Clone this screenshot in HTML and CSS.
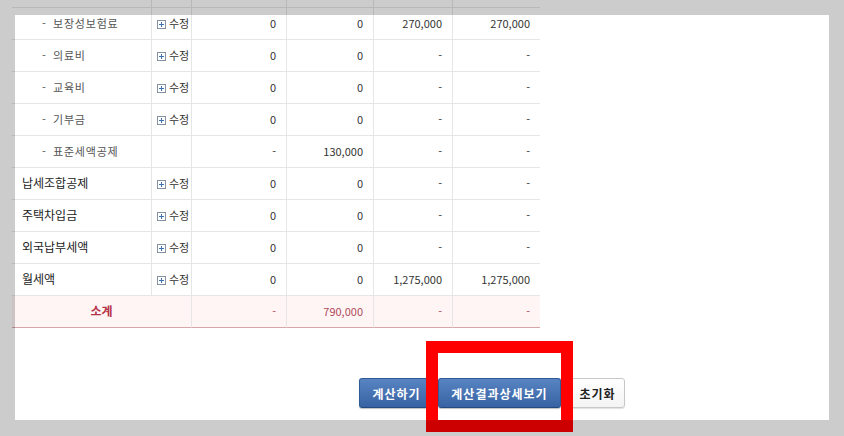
FILE: index.html
```html
<!DOCTYPE html>
<html lang="ko">
<head>
<meta charset="utf-8">
<link rel="stylesheet" href="styles.css">
</head>
<body>
<div class="page">
  <table class="grid">
    <colgroup>
      <col class="c1"><col class="c2"><col class="c3"><col class="c4"><col class="c5"><col class="c6">
    </colgroup>
    <tr class="cut"><td></td><td></td><td></td><td></td><td></td><td></td></tr>
    <tr>
      <td class="name sub"><span class="dash">-</span>보장성보험료</td>
      <td class="edit"><svg class="plus" viewBox="0 0 9 9" width="9" height="9"><rect x="0.5" y="0.5" width="8" height="8" fill="#fff" stroke="#8592a4"/><path d="M4.5 2v5M2 4.5h5" stroke="#3f73b3" stroke-width="1"/></svg>수정</td>
      <td class="num">0</td><td class="num">0</td><td class="num">270,000</td><td class="num">270,000</td>
    </tr>
    <tr>
      <td class="name sub"><span class="dash">-</span>의료비</td>
      <td class="edit"><svg class="plus" viewBox="0 0 9 9" width="9" height="9"><rect x="0.5" y="0.5" width="8" height="8" fill="#fff" stroke="#8592a4"/><path d="M4.5 2v5M2 4.5h5" stroke="#3f73b3" stroke-width="1"/></svg>수정</td>
      <td class="num">0</td><td class="num">0</td><td class="num">-</td><td class="num">-</td>
    </tr>
    <tr>
      <td class="name sub"><span class="dash">-</span>교육비</td>
      <td class="edit"><svg class="plus" viewBox="0 0 9 9" width="9" height="9"><rect x="0.5" y="0.5" width="8" height="8" fill="#fff" stroke="#8592a4"/><path d="M4.5 2v5M2 4.5h5" stroke="#3f73b3" stroke-width="1"/></svg>수정</td>
      <td class="num">0</td><td class="num">0</td><td class="num">-</td><td class="num">-</td>
    </tr>
    <tr>
      <td class="name sub"><span class="dash">-</span>기부금</td>
      <td class="edit"><svg class="plus" viewBox="0 0 9 9" width="9" height="9"><rect x="0.5" y="0.5" width="8" height="8" fill="#fff" stroke="#8592a4"/><path d="M4.5 2v5M2 4.5h5" stroke="#3f73b3" stroke-width="1"/></svg>수정</td>
      <td class="num">0</td><td class="num">0</td><td class="num">-</td><td class="num">-</td>
    </tr>
    <tr>
      <td class="name sub"><span class="dash">-</span>표준세액공제</td>
      <td class="edit"></td>
      <td class="num">-</td><td class="num">130,000</td><td class="num">-</td><td class="num">-</td>
    </tr>
    <tr>
      <td class="name">납세조합공제</td>
      <td class="edit"><svg class="plus" viewBox="0 0 9 9" width="9" height="9"><rect x="0.5" y="0.5" width="8" height="8" fill="#fff" stroke="#8592a4"/><path d="M4.5 2v5M2 4.5h5" stroke="#3f73b3" stroke-width="1"/></svg>수정</td>
      <td class="num">0</td><td class="num">0</td><td class="num">-</td><td class="num">-</td>
    </tr>
    <tr>
      <td class="name">주택차입금</td>
      <td class="edit"><svg class="plus" viewBox="0 0 9 9" width="9" height="9"><rect x="0.5" y="0.5" width="8" height="8" fill="#fff" stroke="#8592a4"/><path d="M4.5 2v5M2 4.5h5" stroke="#3f73b3" stroke-width="1"/></svg>수정</td>
      <td class="num">0</td><td class="num">0</td><td class="num">-</td><td class="num">-</td>
    </tr>
    <tr>
      <td class="name">외국납부세액</td>
      <td class="edit"><svg class="plus" viewBox="0 0 9 9" width="9" height="9"><rect x="0.5" y="0.5" width="8" height="8" fill="#fff" stroke="#8592a4"/><path d="M4.5 2v5M2 4.5h5" stroke="#3f73b3" stroke-width="1"/></svg>수정</td>
      <td class="num">0</td><td class="num">0</td><td class="num">-</td><td class="num">-</td>
    </tr>
    <tr>
      <td class="name">월세액</td>
      <td class="edit"><svg class="plus" viewBox="0 0 9 9" width="9" height="9"><rect x="0.5" y="0.5" width="8" height="8" fill="#fff" stroke="#8592a4"/><path d="M4.5 2v5M2 4.5h5" stroke="#3f73b3" stroke-width="1"/></svg>수정</td>
      <td class="num">0</td><td class="num">0</td><td class="num">1,275,000</td><td class="num">1,275,000</td>
    </tr>
    <tr class="total">
      <td class="label" colspan="2">소계</td>
      <td class="num">-</td><td class="num">790,000</td><td class="num">-</td><td class="num">-</td>
    </tr>
  </table>

  <div class="actions">
    <button class="btn blue">계산하기</button>
    <button class="btn blue detail">계산결과상세보기</button>
    <button class="btn white">초기화</button>
  </div>
</div>

<div class="highlight"></div>
<div class="spot"></div>
</body>
</html>
```

FILE: styles.css
```css
html, body {
  margin: 0;
  padding: 0;
  background: #fff;
  overflow: hidden;
}

body {
  width: 844px;
  height: 436px;
  font-family: "Noto Sans CJK KR", "Noto Sans", sans-serif;
  color: #333;
}

.page {
  padding-left: 12px;
}

.grid {
  border-collapse: separate;
  border-spacing: 0;
  table-layout: fixed;
  width: 528px;
}

.c1 { width: 140px; }
.c2 { width: 40px; }
.c3 { width: 95px; }
.c4 { width: 87px; }
.c5 { width: 79px; }
.c6 { width: 87px; }

.grid td {
  padding: 0;
  border-bottom: 1px solid #e6e6e6;
  border-right: 1px solid #e6e6e6;
  vertical-align: middle;
  line-height: 14px;
  white-space: nowrap;
  box-sizing: border-box;
}

.grid tr td:last-child {
  border-right: none;
}

.grid tr.cut td {
  height: 8px;
}

.grid tr:not(.cut) td {
  height: 32px;
  padding-bottom: 1px;
}

.name {
  padding-left: 10px !important;
  font-size: 12px;
  color: #222;
}

.name.sub {
  padding-left: 30px !important;
  font-size: 11px;
  color: #555;
  letter-spacing: 0.8px;
}

.dash {
  display: inline-block;
  width: 11px;
}

.edit {
  padding-left: 5px !important;
  font-size: 11px;
  color: #333;
}

.plus {
  vertical-align: -1px;
  margin-right: 3px;
}

.num {
  text-align: right;
  padding-right: 10px !important;
  font-size: 11px;
  color: #333;
}

.total td {
  background: #fff5f5;
  border-bottom: 1px solid #d9a6a8 !important;
}

.total .label {
  text-align: center;
  font-size: 12px;
  font-weight: bold;
  color: #b3334a;
}

.total .num {
  color: #b04a5c;
}

.actions {
  display: flex;
  align-items: flex-start;
  margin-top: 50px;
  margin-left: 347px;
}

.btn {
  height: 30px;
  padding: 0;
  font-family: "Noto Sans CJK KR", sans-serif;
  font-size: 12px;
  font-weight: bold;
  letter-spacing: 1px;
  border-radius: 3px;
  cursor: pointer;
}

.blue {
  width: 75px;
  color: #fff;
  background: linear-gradient(#5884c2, #3763a4);
  border: 1px solid #2f5b96;
  border-bottom-color: #244a80;
  box-shadow: 0 1px 1px rgba(0, 0, 0, 0.25);
}

.blue.detail {
  width: 123px;
  margin-left: 4px;
}

.white {
  width: 55px;
  margin-left: 9px;
  color: #222;
  background: linear-gradient(#fff, #f4f4f4);
  border: 1px solid #c8c8c8;
  box-shadow: 0 1px 1px rgba(0, 0, 0, 0.12);
}

.highlight {
  position: absolute;
  left: 426px;
  top: 341px;
  width: 147px;
  height: 91px;
  box-sizing: border-box;
  border: 12px solid #ff0000;
  z-index: 1;
}

.spot {
  position: absolute;
  left: 15px;
  top: 15px;
  width: 814px;
  height: 405px;
  box-shadow: 0 0 0 2000px rgba(0, 0, 0, 0.2);
  z-index: 2;
  pointer-events: none;
}
```
